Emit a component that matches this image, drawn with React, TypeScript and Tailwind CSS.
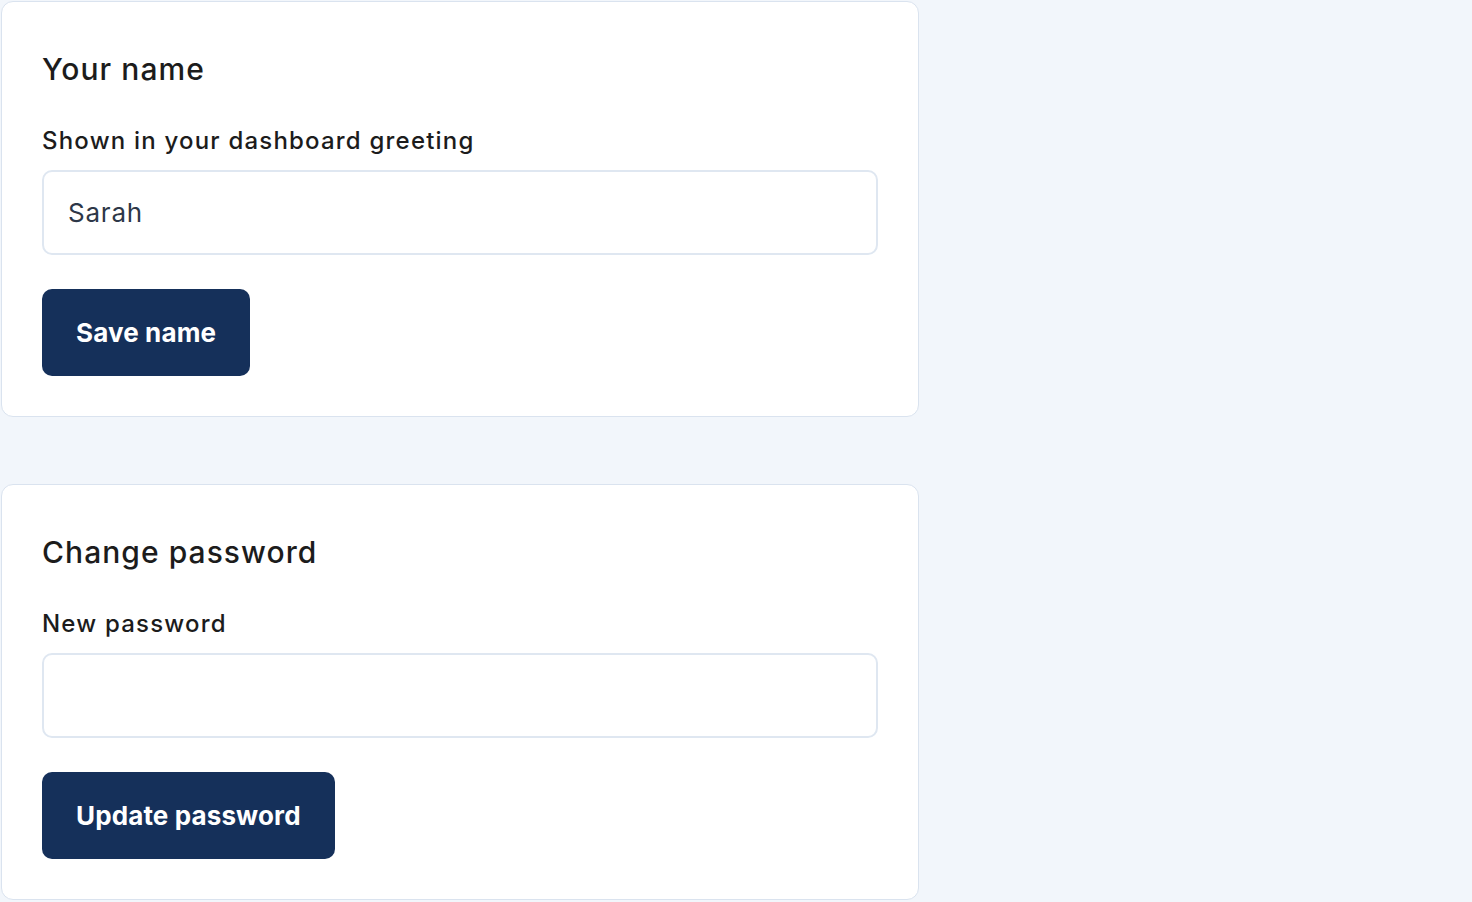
const FONT = { fontFamily: '"Inter", "Noto Sans", sans-serif' };

function Card({ title, label, value, button }: {
  title: string;
  label: string;
  value: string;
  button: string;
}) {
  return (
    <section className="w-[918px] rounded-[12px] border border-[#dae3ef] bg-white px-10 pt-[47px] pb-10">
      <h2 className="text-[30px] leading-[40px] font-medium tracking-[0.035em] text-[#1c1c1c]">{title}</h2>
      <label className="mt-[35px] block text-[24px] leading-[33px] font-medium tracking-[0.05em] text-[#1c1c1c]">
        {label}
      </label>
      <input
        defaultValue={value}
        type={value ? "text" : "password"}
        className="mt-[13px] block h-[85px] w-full rounded-[10px] border-2 border-[#dfe7f1] bg-white px-[24px] text-[26px] tracking-[0.03em] text-[#2d3748] outline-none"
        style={FONT}
      />
      <button className="mt-[34px] h-[87px] rounded-[10px] bg-[#15305a] px-[34px] text-[26px] font-bold tracking-[0.005em] text-white">
        {button}
      </button>
    </section>
  );
}

export default function App() {
  return (
    <div className="min-h-screen bg-[#f2f6fb] pt-px pl-px" style={FONT}>
      <div className="flex flex-col gap-[67px]">
        <Card title="Your name" label="Shown in your dashboard greeting" value="Sarah" button="Save name" />
        <Card title="Change password" label="New password" value="" button="Update password" />
      </div>
    </div>
  );
}
